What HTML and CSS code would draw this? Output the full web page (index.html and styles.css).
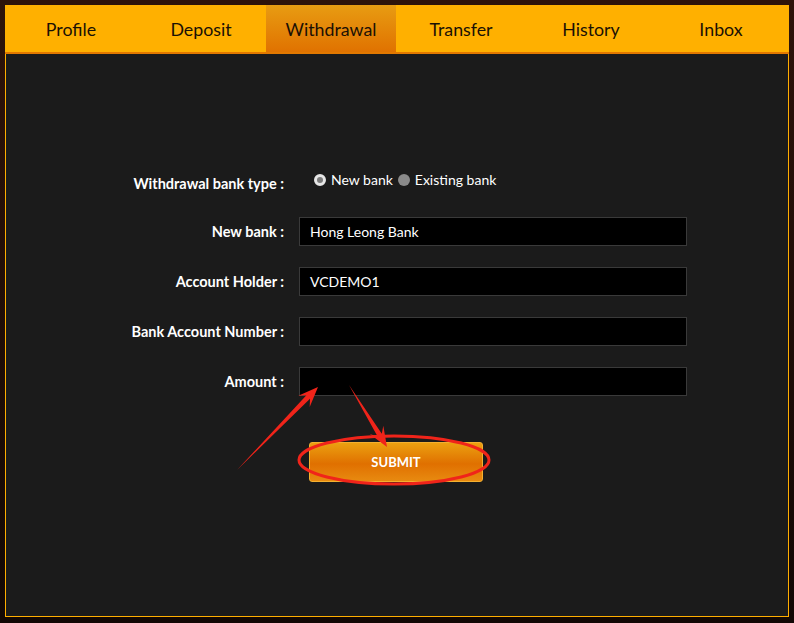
FILE: index.html
```html
<!DOCTYPE html>
<html lang="en">
<head>
    <meta charset="UTF-8">
    <meta name="viewport" content="width=device-width, initial-scale=1.0">
    <title>Withdrawal</title>
    <link rel="stylesheet" href="styles.css">
</head>
<body>
    <div class="wrapper">
        <div class="tabs">
            <div class="tab">Profile</div>
            <div class="tab">Deposit</div>
            <div class="tab active">Withdrawal</div>
            <div class="tab">Transfer</div>
            <div class="tab">History</div>
            <div class="tab">Inbox</div>
        </div>
        <div class="panel">
            <form class="withdraw-form">
                <div class="form-row radio-row">
                    <label class="form-label">Withdrawal bank type :</label>
                    <div class="radio-group">
                        <span class="radio checked"></span><span class="radio-text">New bank</span>
                        <span class="radio"></span><span class="radio-text">Existing bank</span>
                    </div>
                </div>
                <div class="form-row">
                    <label class="form-label">New bank :</label>
                    <div class="field">Hong Leong Bank</div>
                </div>
                <div class="form-row">
                    <label class="form-label">Account Holder :</label>
                    <div class="field">VCDEMO1</div>
                </div>
                <div class="form-row">
                    <label class="form-label">Bank Account Number :</label>
                    <div class="field"></div>
                </div>
                <div class="form-row">
                    <label class="form-label">Amount :</label>
                    <div class="field"></div>
                </div>
                <div class="form-row submit-row">
                    <span></span>
                    <div><button type="button" class="submit-button">SUBMIT</button></div>
                </div>
            </form>
        </div>
    </div>

    <!-- пометки поверх скриншота -->
    <svg class="marks" width="794" height="623" viewBox="0 0 794 623">
        <ellipse cx="394" cy="460" rx="95" ry="24" fill="none" stroke="#f0241a" stroke-width="3"/>
        <polygon points="237,470 310,398.7 309.7,406.9 318,387 298.3,395.7 306.4,395.3" fill="#f0241a"/>
        <polygon points="349,385 381.8,433.8 383.3,425.7 387,447 369.7,434.1 377.6,436.4" fill="#f0241a"/>
    </svg>
</body>
</html>
```

FILE: styles.css
```css
body {
    margin: 0;
    width: 794px;
    height: 623px;
    background: linear-gradient(to bottom, #2e130a, #120805);
    font-family: "Lato", "Open Sans", sans-serif;
    position: relative;
    overflow: hidden;
}
.wrapper {
    margin: 5px 0 0 5px;
    width: 784px;
}
.tabs {
    display: flex;
    height: 47px;
    background-color: #ffb000;
    border-bottom: 2px solid #e27800;
    padding-left: 1px;
}
.tab {
    width: 130px;
    display: flex;
    align-items: center;
    justify-content: center;
    font-size: 17.8px;
    color: #1a1005;
    box-sizing: border-box;
}
.tab.active {
    background: linear-gradient(to bottom, #e89c12, #e07200);
}
.panel {
    height: 563px;
    box-sizing: border-box;
    background-color: #1b1b1b;
    border: 1px solid #ffae00;
    border-top: none;
    padding-top: 113px;
}
.withdraw-form {
    margin-left: 94px;
    display: flex;
    flex-direction: column;
    gap: 21px;
}
.form-row {
    display: grid;
    grid-template-columns: 184px 388px;
    column-gap: 15px;
    align-items: center;
    height: 29px;
}
.form-label {
    text-align: right;
    font-size: 14.5px;
    font-weight: bold;
    color: #ffffff;
}
.radio-row .form-label {
    padding-top: 4px;
}
.radio-group {
    display: flex;
    align-items: center;
    font-size: 14px;
    color: #ffffff;
    padding-left: 15px;
    padding-bottom: 4px;
}
.radio {
    width: 12px;
    height: 12px;
    border-radius: 50%;
    background-color: #8a8a8a;
    margin-right: 5px;
    box-sizing: border-box;
}
.radio.checked {
    background-color: #7a7a7a;
    border: 3px solid #e6e6e6;
}
.radio-text {
    margin-right: 5px;
}
.field {
    height: 29px;
    box-sizing: border-box;
    background-color: #000000;
    border: 1px solid #3a3a3a;
    color: #ffffff;
    font-size: 14px;
    padding-left: 10px;
    display: flex;
    align-items: center;
}
.submit-row {
    margin-top: 25px;
    height: 40px;
}
.submit-button {
    margin-left: 10px;
    width: 174px;
    height: 40px;
    border: 1px solid #f4b030;
    border-radius: 3px;
    background: linear-gradient(to bottom, #eba010, #e07000 55%, #e88a10);
    color: #ffffff;
    font-family: "Lato", "Open Sans", sans-serif;
    font-size: 13px;
    font-weight: bold;
    cursor: pointer;
}
.marks {
    position: absolute;
    left: 0;
    top: 0;
    pointer-events: none;
}
```
